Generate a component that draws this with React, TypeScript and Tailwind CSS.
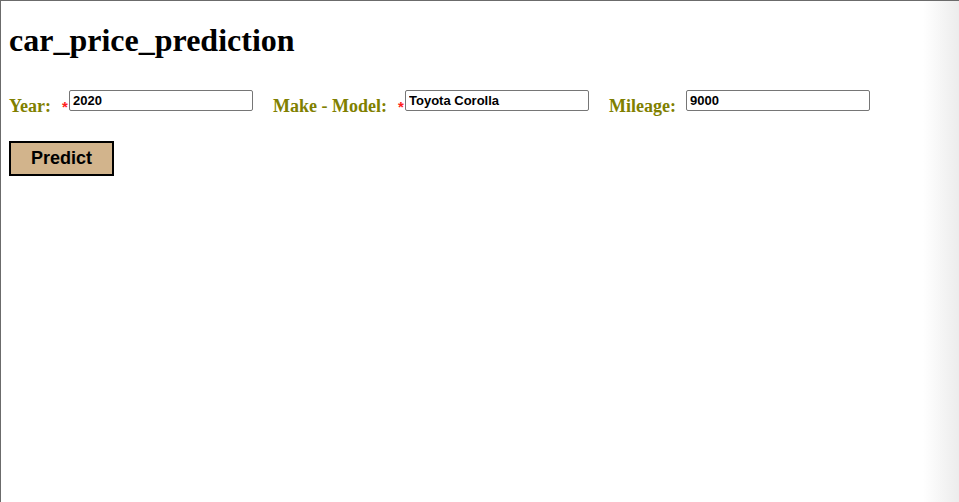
export default function App() {
  const serif = { fontFamily: '"Liberation Serif", "Times New Roman", serif' };
  const sans = { fontFamily: '"Liberation Sans", Arial, sans-serif' };

  return (
    <div className="relative h-[502px] w-[959px] overflow-hidden border-l border-t border-[#6b6b6b] bg-white">
      <div className="pointer-events-none absolute right-0 top-0 h-full w-[36px] bg-gradient-to-r from-white to-[#ececec]" />
      <div className="relative px-2 pt-[21px]">
        <h1 className="text-[32px] font-bold leading-[37px] text-black" style={serif}>
          car_price_prediction
        </h1>
        <div className="mt-[31px] flex items-start">
          <Field label="Year:" required value="2020" labelWidth="w-[53px]" />
          <div className="w-[20px]" />
          <Field label="Make - Model:" required value="Toyota Corolla" labelWidth="w-[125px]" />
          <div className="w-[20px]" />
          <Field label="Mileage:" value="9000" labelWidth="w-[77px]" />
        </div>
        <button
          type="button"
          className="mt-[23px] block h-[35px] w-[105px] border-2 border-black bg-[#d2b48c] text-[18px] font-bold text-black"
          style={sans}
        >
          Predict
        </button>
      </div>
    </div>
  );
}

function Field({
  label,
  value,
  required,
  labelWidth,
}: {
  label: string;
  value: string;
  required?: boolean;
  labelWidth: string;
}) {
  return (
    <div className="flex items-start">
      <span
        className={`${labelWidth} pt-[4px] text-[18px] font-bold leading-[24px] text-[#808000]`}
        style={{ fontFamily: '"Liberation Serif", "Times New Roman", serif' }}
      >
        {label}
      </span>
      {required ? (
        <span
          className="w-[7px] pt-[7px] text-[15px] font-bold leading-[20px] text-[#ff2020]"
          style={{ fontFamily: '"Liberation Sans", Arial, sans-serif' }}
        >
          *
        </span>
      ) : null}
      <input
        readOnly
        value={value}
        className="h-[21px] w-[184px] rounded-[2px] border border-[#767676] px-[3px] text-[13px] font-bold text-black outline-none"
        style={{ fontFamily: '"Liberation Sans", Arial, sans-serif' }}
      />
    </div>
  );
}
